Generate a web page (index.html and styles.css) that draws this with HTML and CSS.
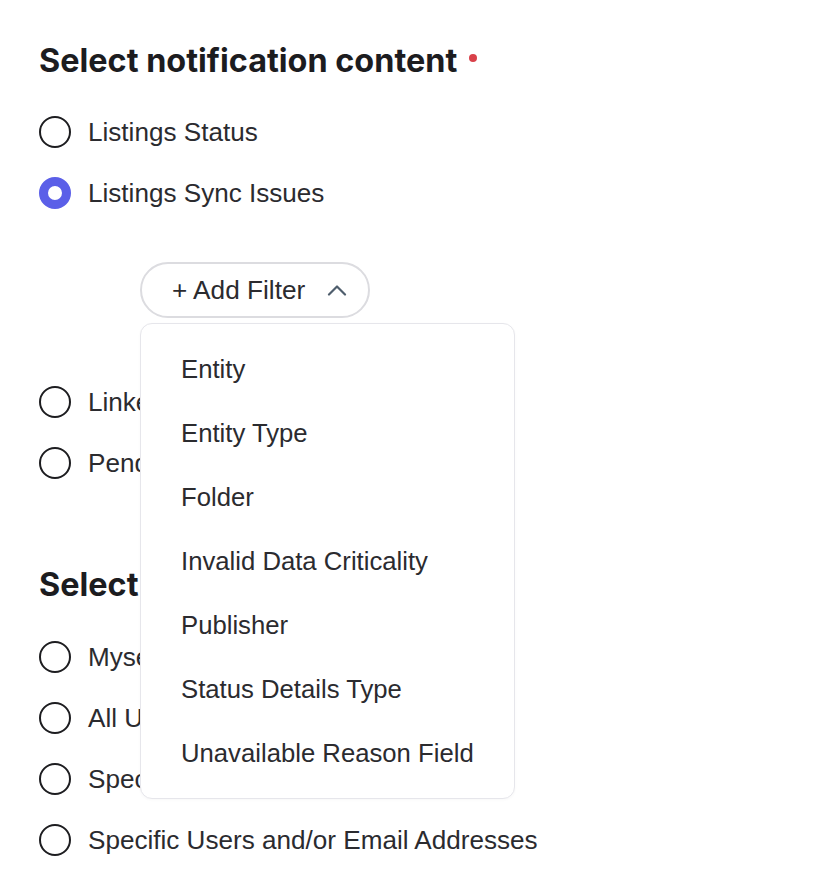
FILE: index.html
```html
<!DOCTYPE html>
<html lang="en">
<head>
<meta charset="utf-8">
<title>Notification settings</title>
<link rel="stylesheet" href="styles.css">
</head>
<body>
<main class="page">
  <section class="group">
    <h2 class="group-title">Select notification content <span class="required-dot" aria-label="required"></span></h2>
    <div class="options">
      <label class="option"><span class="radio"></span><span class="option-label">Listings Status</span></label>
      <label class="option"><span class="radio radio-checked"></span><span class="option-label">Listings Sync Issues</span></label>
    </div>
    <div class="filter">
      <button class="filter-button" type="button">
        <span>+ Add Filter</span>
        <svg class="chevron" width="20" height="12" viewBox="0 0 20 12" aria-hidden="true"><path d="M2 10.5 L10 2.5 L18 10.5" fill="none" stroke="currentColor" stroke-width="2.2" stroke-linecap="round" stroke-linejoin="round"/></svg>
      </button>
      <ul class="menu">
        <li class="menu-item">Entity</li>
        <li class="menu-item">Entity Type</li>
        <li class="menu-item">Folder</li>
        <li class="menu-item">Invalid Data Criticality</li>
        <li class="menu-item">Publisher</li>
        <li class="menu-item">Status Details Type</li>
        <li class="menu-item">Unavailable Reason Field</li>
      </ul>
    </div>
    <div class="options options-after">
      <label class="option"><span class="radio"></span><span class="option-label">Linked Accounts</span></label>
      <label class="option"><span class="radio"></span><span class="option-label">Pending Publisher Suggestions</span></label>
    </div>
  </section>
  <section class="group group-second">
    <h2 class="group-title">Select recipients</h2>
    <div class="options">
      <label class="option"><span class="radio"></span><span class="option-label">Myself</span></label>
      <label class="option"><span class="radio"></span><span class="option-label">All Users</span></label>
      <label class="option"><span class="radio"></span><span class="option-label">Specific User Groups</span></label>
      <label class="option"><span class="radio"></span><span class="option-label">Specific Users and/or Email Addresses</span></label>
    </div>
  </section>
</main>
</body>
</html>
```

FILE: styles.css
```css
* { box-sizing: border-box; }
html, body { margin: 0; padding: 0; background: #ffffff; }
body {
  font-family: "Liberation Sans", Arial, sans-serif;
  color: #2b2b2f;
}
.page {
  padding: 41px 20px 0 39px;
}
.group-title {
  margin: 0;
  font-family: Inter, "Liberation Sans", sans-serif;
  font-weight: 700;
  font-size: 32.4px;
  line-height: 40px;
  letter-spacing: 0;
  color: #1c1c1f;
  display: flex;
  align-items: center;
  gap: 12px;
}
.required-dot {
  width: 8px;
  height: 8px;
  border-radius: 50%;
  background: #d9414a;
  margin-top: -6px;
}
.options {
  display: flex;
  flex-direction: column;
  gap: 29px;
  margin-top: 35px;
}
.options-after { margin-top: 68px; }
.group-second .options { margin-top: 36px; }
.option {
  display: flex;
  align-items: center;
  gap: 17px;
  height: 32px;
  font-size: 26.1px;
  line-height: 32px;
}
.radio {
  flex: none;
  width: 32px;
  height: 32px;
  border-radius: 50%;
  border: 2px solid #1d1d20;
  background: #fff;
}
.radio-checked {
  border: 9.5px solid #5b5fe8;
}
.option-label { white-space: nowrap; }
.filter {
  position: relative;
  margin: 53px 0 0 101px;
}
.filter-button {
  display: inline-flex;
  align-items: center;
  gap: 22px;
  height: 56px;
  padding: 0 21px 0 30px;
  border: 2px solid #dcdce0;
  border-radius: 28px;
  background: #fff;
  font-family: "Liberation Sans", Arial, sans-serif;
  font-size: 26.2px;
  color: #2b2b2f;
}
.chevron { color: #4f5e6d; display: block; }
.menu {
  position: absolute;
  top: 61px;
  left: 0;
  width: 375px;
  margin: 0;
  padding: 13px 0;
  list-style: none;
  background: #fff;
  border: 1.5px solid #e6e6eb;
  border-radius: 12px;
  box-shadow: 0 1px 3px rgba(0,0,0,0.03);
  z-index: 2;
}
.menu-item {
  height: 64px;
  line-height: 64px;
  padding-left: 40px;
  font-size: 25.7px;
  color: #2b2b2f;
  white-space: nowrap;
}
.group-second { margin-top: 86px; }
```
